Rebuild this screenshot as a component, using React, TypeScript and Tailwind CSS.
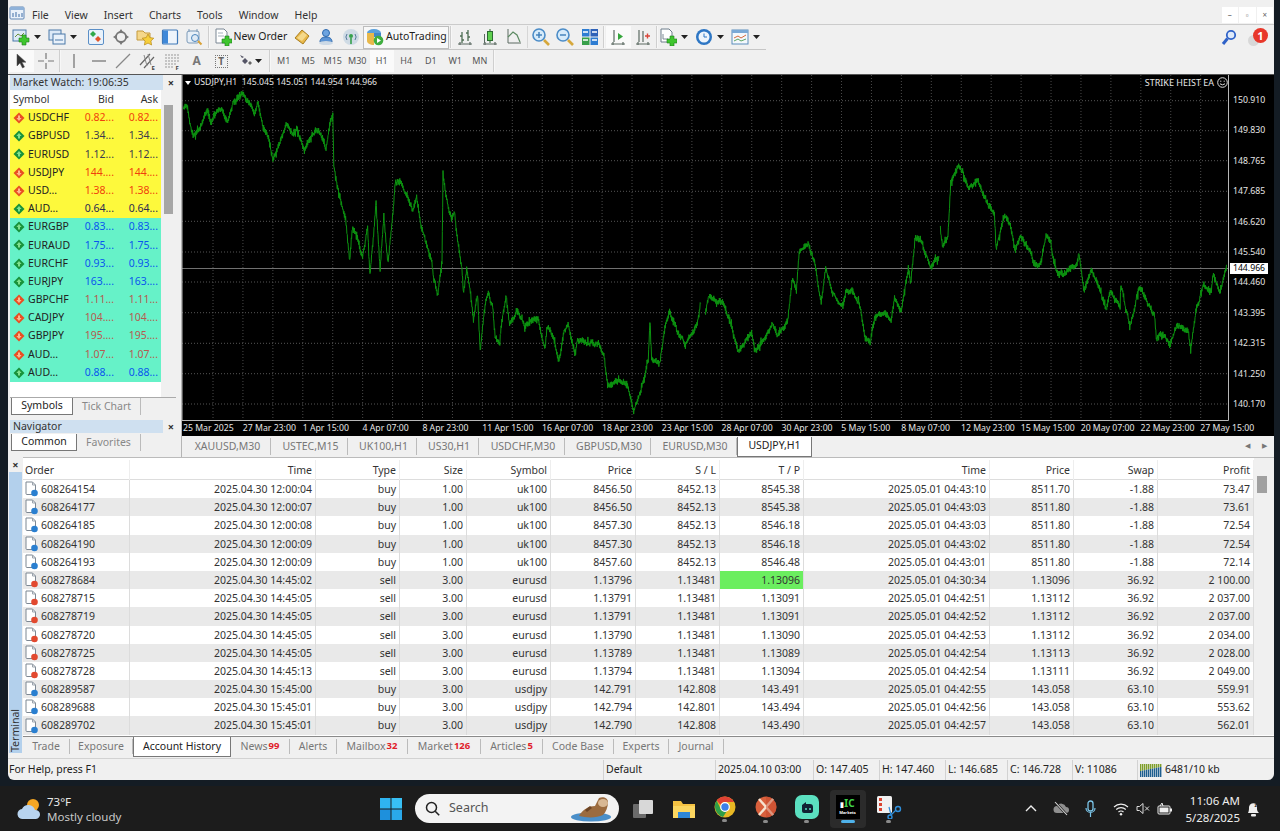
import React, { useMemo } from "react";

const font = "font-['Noto_Sans','Open_Sans',sans-serif]";

/* ---------- chart data: traced points ---------- */
const Z9: number[][] = [[10,90],[20,80],[30,130],[40,165],[60,145],[80,90],[92,130],[110,85],[128,95],[140,128],[158,65],[182,42],[205,70],[220,100],[230,65],[245,140],[262,170],[275,240],[295,190],[315,130],[335,160],[345,145],[368,215],[385,175],[410,150],[432,210],[445,120],[452,100],[455,250],[465,320],[480,380],[490,420],[502,540],[510,440],[525,480],[540,530],[555,440],[562,590],[575,440],[580,360],[582,410],[592,570],[603,410],[615,550],[630,400],[637,310],[655,310],[668,340],[690,390],[700,350],[712,430],[730,500],[745,540],[750,590],[762,640],[775,550],[778,290],[790,360],[803,420],[812,390],[820,470],[835,580],[838,640],[848,570],[860,650],[868,720],[880,640],[888,810],[900,690],[912,635],[925,680],[932,770],[945,790],[952,720],[965,650],[975,740],[997,690],[1020,740],[1045,715],[1060,720],[1080,810],[1085,745],[1105,770],[1120,850],[1135,760],[1148,735],[1168,820],[1175,780],[1210,790],[1240,795],[1255,830],[1265,920],[1295,905],[1325,915],[1342,995],[1365,930],[1385,840],[1390,720],[1395,830],[1420,850],[1432,760],[1447,690],[1470,750],[1495,790],[1530,730],[1540,670]];
const Z10A: number[][] = [[15,500],[25,440],[70,460],[90,520],[110,605],[150,545],[160,605],[185,570],[210,515],[225,555],[255,515],[268,385],[280,420],[288,310],[300,295],[315,280],[335,345],[352,460],[365,350],[385,430],[415,470],[425,420],[445,425],[465,470],[480,570],[495,575],[508,500],[535,490],[555,510],[565,440],[585,480],[605,355],[612,400],[625,265],[640,270],[670,350],[695,320]];
const Z10B: number[][] = [[698,240],[705,290],[720,260],[728,100],[750,45],[765,70],[780,120],[805,85],[825,140],[855,190],[860,295],[885,195],[900,215],[915,300],[930,260],[960,305],[970,350],[985,355],[1005,265],[1018,275],[1025,320],[1035,365],[1055,370],[1095,345],[1100,310],[1115,420],[1135,365],[1155,395],[1180,480],[1190,430],[1220,470],[1222,405],[1240,490],[1248,535],[1275,415],[1295,450],[1320,495],[1325,560],[1350,560],[1365,585],[1385,525],[1418,545],[1425,595],[1440,490],[1460,405],[1485,415],[1490,375],[1510,430],[1530,345]];

function noisy(pts: number[][], seed: number): string {
  let s = seed;
  const rnd = () => {
    s = (s * 16807) % 2147483647;
    return s / 2147483647;
  };
  const out: string[] = [];
  let flip = 1;
  let drift = 0;
  for (let i = 0; i < pts.length - 1; i++) {
    const [x0, y0] = pts[i];
    const [x1, y1] = pts[i + 1];
    const n = Math.max(1, Math.round(Math.abs(x1 - x0) / 0.4));
    for (let k = 0; k < n; k++) {
      const t = k / n;
      flip = -flip;
      drift = drift * 0.8 + (rnd() - 0.5) * 2.4;
      const spike = rnd() > 0.96 ? 3 : 0;
      const y = y0 + (y1 - y0) * t + drift + flip * (0.8 + rnd() * 2.2 + spike);
      out.push(`${(x0 + (x1 - x0) * t).toFixed(2)},${y.toFixed(1)}`);
    }
  }
  const l = pts[pts.length - 1];
  out.push(`${l[0].toFixed(1)},${l[1].toFixed(1)}`);
  return out.join(" ");
}

const gridXs = Array.from({ length: 35 }, (_, i) => 31 + i * 29.93);
const gridYs = [25.7, 55.7, 85.7, 116.3, 146.3, 177, 207, 237.7, 268.3, 298.7, 329];

function Chart() {
  const a = useMemo(() => noisy(Z9.map(([x, y]) => [180 + x / 2.958 - 182, 80 + y / 3 - 75]), 11), []);
  const b = useMemo(() => noisy(Z10A.map(([x, y]) => [700 + x / 2.904 - 182, 150 + y / 3 - 75]), 23), []);
  const c = useMemo(() => noisy(Z10B.map(([x, y]) => [700 + x / 2.904 - 182, 150 + y / 3 - 75]), 37), []);
  return (
    <svg width="1047" height="346" className="block shrink-0">
      <rect width="1047" height="346" fill="#000" />
      {gridXs.map((x) => (
        <line key={x} x1={x} x2={x} y1="0" y2="345" stroke="#4a4a4a" strokeDasharray="1 2" />
      ))}
      {gridYs.map((y) => (
        <line key={y} x1="0" x2="1047" y1={y} y2={y} stroke="#555" strokeDasharray="1 2" />
      ))}
      <line x1="0" x2="1047" y1="193.5" y2="193.5" stroke="#707070" />
      {[a, b, c].map((p, i) => (
        <polyline key={i} points={p} fill="none" stroke="#0c9210" strokeWidth="1" strokeLinejoin="round" />
      ))}
      <path d="M0 0V345.5H1046.5V0" fill="none" stroke="#b8b8b8" />
    </svg>
  );
}

/* ---------- toolbar icons ---------- */
const S = ({ children, w = 18, h = 18 }: { children: React.ReactNode; w?: number; h?: number }) => (
  <svg width={w} height={h} viewBox={`0 0 ${w} ${h}`} className="block shrink-0">
    {children}
  </svg>
);
const Caret = () => (
  <svg width="7" height="4" viewBox="0 0 7 4" className="block">
    <path d="M0 0h7L3.5 4z" fill="#222" />
  </svg>
);
const Plus = ({ x, y }: { x: number; y: number }) => (
  <path d={`M${x + 3} ${y}h4v3h3v4h-3v3h-4v-3h-3v-4h3z`} fill="#3fc52e" stroke="#1d7d1d" strokeWidth="0.6" />
);
const NewChart = () => (
  <S>
    <rect x="1" y="2" width="13" height="11" fill="#dce9f7" stroke="#4a78a8" />
    <path d="M3 9l3-3 3 2 3-3" stroke="#6b8f3a" fill="none" />
    <Plus x={7} y={7} />
  </S>
);
const Profiles = () => (
  <S>
    <rect x="1" y="2" width="12" height="10" fill="#dce9f7" stroke="#4a78a8" />
    <rect x="5" y="6" width="12" height="10" fill="#e9f1fa" stroke="#4a78a8" />
    <path d="M7 12h8" stroke="#4a78a8" />
  </S>
);
const MW = () => (
  <S>
    <rect x="1.5" y="1.5" width="15" height="15" rx="1.5" fill="#e9f2fb" stroke="#5b8fc7" />
    <path d="M6 3l3 3-3 3-3-3z" fill="#2fa84a" />
    <path d="M11 8l3 3-3 3-3-3z" fill="#e2552a" />
  </S>
);
const Nav = () => (
  <S>
    <circle cx="9" cy="9" r="5" fill="none" stroke="#777" strokeWidth="1.8" />
    <path d="M9 1l2 3H7zM9 17l-2-3h4zM1 9l3-2v4zM17 9l-3 2V7z" fill="#777" />
  </S>
);
const StarFolder = () => (
  <S>
    <path d="M1 3h6l2 2h5v7H1z" fill="#f5d78a" stroke="#c59a3c" />
    <path d="M12 6l1.8 3.6 4 .6-2.9 2.8.7 4-3.6-1.9-3.6 1.9.7-4L6.2 10.2l4-.6z" fill="#f6cf3d" stroke="#b98a17" strokeWidth="0.7" />
  </S>
);
const Term = () => (
  <S>
    <rect x="1.5" y="2" width="15" height="14" rx="1" fill="#eef4fb" stroke="#3f78b8" strokeWidth="1.2" />
    <rect x="2" y="2.5" width="5" height="13" fill="#3f88d8" />
  </S>
);
const Tester = () => (
  <S>
    <rect x="2" y="3" width="12" height="12" rx="2" fill="#e8f0f8" stroke="#7d9ab8" />
    <path d="M4 1v3M12 1v3" stroke="#7d9ab8" />
    <circle cx="10" cy="10" r="3.5" fill="#dfeaf5" stroke="#4c86bd" />
    <path d="M13 13l3.5 3.5" stroke="#d9a136" strokeWidth="2" />
  </S>
);
const NewOrderIco = () => (
  <S>
    <path d="M2 1h8l3 3v11H2z" fill="#fff" stroke="#7a8794" />
    <path d="M4 5h5M4 8h6" stroke="#a5b1bc" />
    <Plus x={8} y={8} />
  </S>
);
const Diamond = () => (
  <S>
    <path d="M9 2l7 6-6 8-8-6z" fill="#e9b94b" stroke="#a97e1f" />
    <path d="M4 10l6-6 4 3-5 6z" fill="#f5d98a" />
  </S>
);
const UserIco = () => (
  <S>
    <circle cx="9" cy="5" r="3.5" fill="#6da4e0" stroke="#2e69ad" />
    <path d="M3 14c0-4 3-5 6-5s6 1 6 5z" fill="#5d95d6" stroke="#2e69ad" />
    <ellipse cx="9" cy="15" rx="7" ry="2" fill="#ccd9e6" />
  </S>
);
const Signal = () => (
  <S>
    <circle cx="9" cy="9" r="8" fill="#cfdbe5" />
    <path d="M5 6a5 5 0 0 0 0 6M13 6a5 5 0 0 1 0 6" stroke="#55799b" fill="none" />
    <circle cx="9" cy="8" r="2" fill="#36a14c" />
    <path d="M9 10v6" stroke="#36a14c" strokeWidth="1.6" />
  </S>
);
const AutoIco = () => (
  <S>
    <ellipse cx="8" cy="5" rx="7" ry="4" fill="#5aa0dc" />
    <path d="M1 5v8c0 2 3 4 7 4V5z" fill="#e8b84a" />
    <path d="M8 5h7v4H8z" fill="#4187c7" />
    <circle cx="12.5" cy="12.5" r="4.8" fill="#3fae3f" />
    <path d="M11 10v5l4-2.5z" fill="#fff" />
  </S>
);
const Axis = () => <path d="M2 16h14M4 14v3M14 14v3" stroke="#5c6b63" strokeWidth="1.2" />;
const Bars = () => (
  <S>
    <Axis />
    <path d="M6 4v11M6 8H4M6 12h2M12 2v11M12 5h-2M12 9h2" stroke="#4d6d53" strokeWidth="1.3" />
  </S>
);
const Candle = () => (
  <S>
    <Axis />
    <path d="M9 1v14" stroke="#2c6b31" />
    <rect x="6.5" y="3.5" width="5" height="9" fill="#5fd04f" stroke="#2c6b31" />
    <path d="M3.5 6v9" stroke="#5c6b63" />
  </S>
);
const LineIco = () => (
  <S>
    <path d="M3 1v14h13" stroke="#5c6b63" fill="none" />
    <path d="M3 9l5-5 4 3 3 7" stroke="#5c8a62" fill="none" strokeWidth="1.2" />
  </S>
);
const ZoomIco = ({ plus }: { plus?: boolean }) => (
  <S w={20} h={20}>
    <circle cx="8" cy="8" r="6" fill="#d6ebfa" stroke="#4b8cc7" strokeWidth="1.6" />
    <path d="M5 8h6" stroke="#3c7db8" strokeWidth="1.4" />
    {plus && <path d="M8 5v6" stroke="#3c7db8" strokeWidth="1.4" />}
    <path d="M13 13l5 5" stroke="#d6a83c" strokeWidth="2.6" />
  </S>
);
const Tile = () => (
  <S>
    <rect x="1" y="1" width="7.5" height="7.5" fill="#2e7dd2" />
    <rect x="9.5" y="1" width="7.5" height="7.5" fill="#2f62b8" />
    <rect x="1" y="9.5" width="7.5" height="7.5" fill="#38a04a" />
    <rect x="9.5" y="9.5" width="7.5" height="7.5" fill="#2e7dd2" />
    <path d="M2 4h5M11 4h5M2 12h5M11 12h5" stroke="#fff" strokeWidth="1.4" />
  </S>
);
const ScrollIco = () => (
  <S>
    <Axis />
    <path d="M5 2v12" stroke="#5c6b63" strokeWidth="1.2" />
    <path d="M9 5l5 3.5-5 3.5z" fill="#35a63c" />
  </S>
);
const ShiftIco = () => (
  <S>
    <Axis />
    <path d="M5 2v12M9 3v11" stroke="#5c6b63" strokeWidth="1.2" />
    <path d="M11 8h5M13.5 5.5v5" stroke="#d9463a" strokeWidth="1.4" />
  </S>
);
const NewDoc = () => (
  <S>
    <path d="M2 1h8l3 3v10H2z" fill="#fff" stroke="#6f7e8c" />
    <path d="M4 6v5h5" stroke="#7d8a95" fill="none" />
    <Plus x={8} y={8} />
  </S>
);
const Clock = () => (
  <S>
    <circle cx="9" cy="9" r="8" fill="#2d76c4" />
    <circle cx="9" cy="9" r="5.5" fill="#eef5fc" />
    <path d="M9 5.5V9h3" stroke="#2d76c4" fill="none" />
  </S>
);
const Template = () => (
  <S>
    <rect x="1" y="2" width="16" height="14" fill="#f4f8fc" stroke="#5d8ebc" />
    <rect x="1" y="2" width="16" height="3" fill="#7aa9d6" />
    <path d="M3 10l4-2 3 2 5-3" stroke="#d7693a" fill="none" />
    <path d="M3 13l4-2 3 2 5-2" stroke="#5ba562" fill="none" />
  </S>
);
const Arrow = () => (
  <S>
    <path d="M5 2v12l3-3 2.5 5 2-1-2.5-4.8H14z" fill="#333" stroke="#555" strokeWidth="0.5" />
  </S>
);
const Cross = () => (
  <S>
    <path d="M9 1v6M9 11v6M1 9h6M11 9h6" stroke="#777" strokeWidth="1.2" />
  </S>
);
const VLine = () => <S><path d="M9 2v14" stroke="#777" strokeWidth="1.3" /></S>;
const HLine = () => <S><path d="M2 9h14" stroke="#777" strokeWidth="1.3" /></S>;
const Trend = () => <S><path d="M2 16L16 2" stroke="#888" strokeWidth="1.3" /></S>;
const Channel = () => (
  <S>
    <path d="M1 13L11 2M5 16L15 5" stroke="#666" strokeWidth="1.2" />
    <path d="M5 3l3 11M9 2l3 11" stroke="#888" />
    <text x="12.5" y="17.5" fontSize="6" fill="#444" fontWeight="700">E</text>
  </S>
);
const Fib = () => (
  <S>
    <path d="M2 3h14M2 6h14M2 9h14M2 12h12M2 15h8" stroke="#999" strokeDasharray="2 1" />
    <text x="12.5" y="17.5" fontSize="6" fill="#444" fontWeight="700">F</text>
  </S>
);
const ArrowsIco = () => (
  <S>
    <path d="M4 3l4 2-2 1zM9 6l3 3-3 3-3-3z" fill="#556" />
    <path d="M14 9l2 2-2 2-2-2z" fill="#666" />
  </S>
);

const Cell = ({ children, active }: { children: React.ReactNode; active?: boolean }) => (
  <div className={`flex h-[22px] w-[24.5px] shrink-0 items-center justify-center ${active ? "bg-[#fafafa]" : ""}`}>
    {children}
  </div>
);
const Drop = ({ children }: { children: React.ReactNode }) => (
  <div className="flex h-[22px] w-[36px] shrink-0 items-center pr-[4px]">
    <div className="flex w-[18px] justify-center">{children}</div>
    <div className="flex w-[14px] justify-center">
      <Caret />
    </div>
  </div>
);
const Sep = () => <div className="mx-px h-[22px] w-[2px] shrink-0 border-l border-[#cfcfcf] bg-[#f7f7f7]" />;
const ThinSep = () => <div className="h-[22px] w-[2px] shrink-0 border-l border-[#d6d6d6]" />;

function Toolbar1() {
  return (
    <div className="flex h-[25px] w-[758px] items-center border-b border-[#c6c6c6] pl-[4px]">
      <Drop><NewChart /></Drop>
      <Drop><Profiles /></Drop>
      <Cell><MW /></Cell>
      <Cell><Nav /></Cell>
      <Cell><StarFolder /></Cell>
      <Cell><Term /></Cell>
      <Cell><Tester /></Cell>
      <Sep />
      <div className="flex h-[22px] w-[79px] shrink-0 items-center gap-[2px] pl-[3px] text-[10.5px] text-[#1c1c1c]">
        <NewOrderIco />
        <span className="whitespace-nowrap">New Order</span>
      </div>
      <Cell><Diamond /></Cell>
      <Cell><UserIco /></Cell>
      <Cell><Signal /></Cell>
      <div className="flex h-[23px] w-[86px] shrink-0 items-center gap-[2px] border border-[#bdbdbd] bg-[#f8f8f8] pl-[2px] text-[10.5px] text-[#1c1c1c]">
        <AutoIco />
        <span className="whitespace-nowrap">AutoTrading</span>
      </div>
      <Sep />
      <Cell><Bars /></Cell>
      <Cell><Candle /></Cell>
      <Cell><LineIco /></Cell>
      <ThinSep />
      <Cell><ZoomIco plus /></Cell>
      <Cell><ZoomIco /></Cell>
      <Cell><Tile /></Cell>
      <Sep />
      <Cell active><ScrollIco /></Cell>
      <Cell><ShiftIco /></Cell>
      <Sep />
      <Drop><NewDoc /></Drop>
      <Drop><Clock /></Drop>
      <Drop><Template /></Drop>
    </div>
  );
}

function Toolbar2() {
  const tf = ["M1", "M5", "M15", "M30", "H1", "H4", "D1", "W1", "MN"];
  return (
    <div className="flex h-[24px] items-start pl-[1px]">
      <Cell active><Arrow /></Cell>
      <Cell><Cross /></Cell>
      <Sep />
      <Cell><VLine /></Cell>
      <Cell><HLine /></Cell>
      <Cell><Trend /></Cell>
      <Cell><Channel /></Cell>
      <Cell><Fib /></Cell>
      <Cell><span className="text-[12px] font-bold text-[#777]">A</span></Cell>
      <Cell>
        <span className="flex h-[13px] w-[13px] items-center justify-center border border-dotted border-[#777] text-[10px] font-bold leading-none text-[#666]">T</span>
      </Cell>
      <div className="flex h-[22px] w-[34px] shrink-0 items-center pl-[2px]">
        <ArrowsIco />
        <div className="ml-[1px]"><Caret /></div>
      </div>
      <Sep />
      {tf.map((t) => (
        <div key={t} className={`flex h-[22px] w-[24.5px] shrink-0 items-center justify-center text-[9px] text-[#555] ${t === "H1" ? "bg-[#fafafa]" : ""}`}>
          {t}
        </div>
      ))}
      <Sep />
    </div>
  );
}

/* ---------- market watch ---------- */
const Tick = ({ up }: { up: boolean }) => (
  <svg width="12" height="12" viewBox="0 0 12 12" className="block shrink-0">
    <path d="M6 .5l5.5 5.5L6 11.5.5 6z" fill={up ? "#17913a" : "#e94e22"} />
    {up ? <path d="M6 3l2.6 3H7v2.6H5V6H3.4z" fill="#7fe08c" /> : <path d="M6 9L3.4 6H5V3.4h2V6h1.6z" fill="#ffb68c" />}
  </svg>
);
const watch: [string, boolean, string, string, string][] = [
  ["USDCHF", false, "0.82...", "text-[#f0400c]", "bg-[#fdf93c]"],
  ["GBPUSD", true, "1.34...", "text-[#3c3c4c]", "bg-[#fdf93c]"],
  ["EURUSD", true, "1.12...", "text-[#3c3c4c]", "bg-[#fdf93c]"],
  ["USDJPY", false, "144....", "text-[#f0400c]", "bg-[#fdf93c]"],
  ["USD...", false, "1.38...", "text-[#f0400c]", "bg-[#fdf93c]"],
  ["AUD...", true, "0.64...", "text-[#2c2c50]", "bg-[#fdf93c]"],
  ["EURGBP", true, "0.83...", "text-[#0a55ee]", "bg-[#66f2c8]"],
  ["EURAUD", true, "1.75...", "text-[#0a55ee]", "bg-[#66f2c8]"],
  ["EURCHF", true, "0.93...", "text-[#0a55ee]", "bg-[#66f2c8]"],
  ["EURJPY", true, "163....", "text-[#0a55ee]", "bg-[#66f2c8]"],
  ["GBPCHF", false, "1.11...", "text-[#b65a50]", "bg-[#66f2c8]"],
  ["CADJPY", false, "104....", "text-[#b65a50]", "bg-[#66f2c8]"],
  ["GBPJPY", false, "195....", "text-[#b65a50]", "bg-[#66f2c8]"],
  ["AUD...", false, "1.07...", "text-[#b65a50]", "bg-[#66f2c8]"],
  ["AUD...", true, "0.88...", "text-[#0a55ee]", "bg-[#66f2c8]"],
];

const PanelTab = ({ label, active, w }: { label: string; active?: boolean; w: string }) => (
  <div className={`flex h-[17px] ${w} shrink-0 items-center justify-center text-[10.5px] ${active ? "border-b border-l border-r border-[#777] bg-white text-[#222]" : "border-r border-[#bbb] text-[#888]"}`}>
    {label}
  </div>
);
const X = () => <span className="text-[11px] font-bold leading-none text-[#333]">×</span>;

function LeftPanel() {
  return (
    <div className="flex w-[174px] shrink-0 flex-col border-r border-[#b5b5b5] pl-[2px] text-[10.5px] text-[#333]">
      <div className="flex h-[15px] items-center">
        <div className="flex h-[15px] w-[153px] items-center bg-[#cfe0f0] pl-[3px] text-[10.5px] text-[#333]">Market Watch: 19:06:35</div>
        <div className="flex w-[16px] justify-center"><X /></div>
      </div>
      <div className="flex">
        <div className="w-[151px] bg-white">
          <div className="grid h-[19px] grid-cols-[65px_42px_44px] items-center">
            <span className="pl-[3px]">Symbol</span>
            <span className="pr-[3px] text-right">Bid</span>
            <span className="pr-[3px] text-right">Ask</span>
          </div>
          {watch.map(([sym, up, val, tc, bg], i) => (
            <div key={i} className={`grid h-[18.2px] grid-cols-[65px_42px_44px] items-center ${bg}`}>
              <span className="flex items-center gap-[3px] pl-[3px] text-[#222]">
                <Tick up={up} />
                {sym}
              </span>
              <span className={`pr-[3px] text-right ${tc}`}>{val}</span>
              <span className={`pr-[3px] text-right ${tc}`}>{val}</span>
            </div>
          ))}
          <div className="h-[15px]" />
        </div>
        <div className="h-[307px] w-[14px] bg-[#f0f0f0] pl-[3px] pt-[15px]">
          <div className="h-[109px] w-[9px] bg-[#a6a6a6]" />
        </div>
      </div>
      <div className="flex h-[17px] w-[166px] border-t border-[#aaa] pl-px">
        <PanelTab label="Symbols" active w="w-[62px]" />
        <PanelTab label="Tick Chart" w="w-[68px]" />
      </div>
      <div className="mt-[6px] flex h-[13px] items-center">
        <div className="flex h-[13px] w-[153px] items-center bg-[#cfe0f0] pl-[3px] text-[#333]">Navigator</div>
        <div className="flex w-[16px] justify-center"><X /></div>
      </div>
      <div className="mt-[1px] flex pl-px">
        <PanelTab label="Common" active w="w-[66px]" />
        <PanelTab label="Favorites" w="w-[64px]" />
      </div>
    </div>
  );
}

/* ---------- chart column ---------- */
const prices = ["150.910", "149.830", "148.765", "147.685", "146.620", "145.540", "144.460", "143.395", "142.315", "141.250", "140.170"];
const dates = ["25 Mar 2025", "27 Mar 23:00", "1 Apr 15:00", "4 Apr 07:00", "8 Apr 23:00", "11 Apr 15:00", "16 Apr 07:00", "18 Apr 23:00", "23 Apr 15:00", "28 Apr 07:00", "30 Apr 23:00", "5 May 15:00", "8 May 07:00", "12 May 23:00", "15 May 15:00", "20 May 07:00", "22 May 23:00", "27 May 15:00"];
const chartTabs: [string, string][] = [["XAUUSD,M30", "w-[89px]"], ["USTEC,M15", "w-[77px]"], ["UK100,H1", "w-[69px]"], ["US30,H1", "w-[62px]"], ["USDCHF,M30", "w-[86px]"], ["GBPUSD,M30", "w-[86px]"], ["EURUSD,M30", "w-[86px]"], ["USDJPY,H1", "w-[75px]"]];

function ChartColumn() {
  return (
    <div className="flex min-w-0 flex-1 flex-col">
      <div className="relative h-[361px] bg-black text-[8.7px] text-[#e6e6e6]">
        <div className="flex h-[346px]">
          <Chart />
          <div className="h-[346px] flex-1 overflow-hidden pl-[4px] pt-[19px]">
            {prices.map((p) => (
              <div key={p} className="flex h-[30.4px] items-start leading-[13px]">
                <span>{p}</span>
              </div>
            ))}
          </div>
        </div>
        <div className="flex h-[15px] items-center">
          {dates.map((d) => (
            <span key={d} className="w-[59.85px] shrink-0 whitespace-nowrap pl-px">{d}</span>
          ))}
        </div>
        {/* overlays */}
        <div className="absolute left-[3px] top-[1px] flex items-center gap-[3px]">
          <svg width="6" height="4" viewBox="0 0 6 4"><path d="M0 0h6L3 4z" fill="#fff" /></svg>
          <span className="whitespace-pre text-[8.7px]">USDJPY,H1  145.045 145.051 144.954 144.966</span>
        </div>
        <div className="absolute right-[46px] top-[1px] flex items-center gap-[3px] text-[9px]">
          <span className="whitespace-nowrap">STRIKE HEIST EA</span>
          <svg width="11" height="11" viewBox="0 0 11 11">
            <circle cx="5.5" cy="5.5" r="4.8" fill="none" stroke="#ddd" />
            <circle cx="3.8" cy="4.2" r="0.6" fill="#ddd" />
            <circle cx="7.2" cy="4.2" r="0.6" fill="#ddd" />
            <path d="M3 6.8q2.5 2 5 0" stroke="#ddd" fill="none" />
          </svg>
        </div>
        <div className="absolute left-[1048px] top-[188px] flex h-[11px] w-[38px] items-center justify-center bg-white text-[8.7px] text-black">144.966</div>
      </div>
      <div className="flex h-[21px] items-center text-[10.5px] text-[#777]">
        {chartTabs.map(([t, w], i) =>
          i === 7 ? (
            <div key={t} className={`flex h-[20px] ${w} shrink-0 items-center justify-center border-x border-b border-[#777] bg-white text-[#222]`}>{t}</div>
          ) : (
            <div key={t} className={`flex h-[17px] ${w} shrink-0 items-center justify-center border-r border-[#bbb] pl-[3px]`}>{t}</div>
          )
        )}
        <div className="ml-auto flex gap-[12px] pr-[7px] text-[7px] text-[#777]">
          <span>◀</span>
          <span>▶</span>
        </div>
      </div>
    </div>
  );
}

/* ---------- terminal ---------- */
type R = [string, string, string, string, string, string, string, string, string, string, string, string, string];
const B1 = (o: string, t: string, p: string, tp: string, ct: string, cp: string, pr: string): R => [o, "2025.04.30 " + t, "buy", "1.00", "uk100", p, "8452.13", tp, "2025.05.01 " + ct, cp, "-1.88", pr, "b"];
const S3 = (o: string, t: string, p: string, tp: string, ct: string, cp: string, pr: string): R => [o, "2025.04.30 " + t, "sell", "3.00", "eurusd", p, "1.13481", tp, "2025.05.01 " + ct, cp, "36.92", pr, "s"];
const J3 = (o: string, t: string, p: string, sl: string, tp: string, ct: string, pr: string): R => [o, "2025.04.30 " + t, "buy", "3.00", "usdjpy", p, sl, tp, "2025.05.01 " + ct, "143.058", "63.10", pr, "b"];
const rows: R[] = [
  B1("608264154", "12:00:04", "8456.50", "8545.38", "04:43:10", "8511.70", "73.47"),
  B1("608264177", "12:00:07", "8456.50", "8545.38", "04:43:03", "8511.80", "73.61"),
  B1("608264185", "12:00:08", "8457.30", "8546.18", "04:43:03", "8511.80", "72.54"),
  B1("608264190", "12:00:09", "8457.30", "8546.18", "04:43:02", "8511.80", "72.54"),
  B1("608264193", "12:00:09", "8457.60", "8546.48", "04:43:01", "8511.80", "72.14"),
  S3("608278684", "14:45:02", "1.13796", "1.13096", "04:30:34", "1.13096", "2 100.00"),
  S3("608278715", "14:45:05", "1.13791", "1.13091", "04:42:51", "1.13112", "2 037.00"),
  S3("608278719", "14:45:05", "1.13791", "1.13091", "04:42:52", "1.13112", "2 037.00"),
  S3("608278720", "14:45:05", "1.13790", "1.13090", "04:42:53", "1.13112", "2 034.00"),
  S3("608278725", "14:45:05", "1.13789", "1.13089", "04:42:54", "1.13113", "2 028.00"),
  S3("608278728", "14:45:13", "1.13794", "1.13094", "04:42:54", "1.13111", "2 049.00"),
  J3("608289587", "15:45:00", "142.791", "142.808", "143.491", "04:42:55", "559.91"),
  J3("608289688", "15:45:01", "142.794", "142.801", "143.494", "04:42:56", "553.62"),
  J3("608289702", "15:45:01", "142.790", "142.808", "143.490", "04:42:57", "562.01"),
];
const cols = "grid grid-cols-[107px_186px_84px_67px_84px_85px_84px_84px_186px_84px_84px_96px]";
const heads = ["Order", "Time", "Type", "Size", "Symbol", "Price", "S / L", "T / P", "Time", "Price", "Swap", "Profit"];

const OrderIco = ({ sell }: { sell: boolean }) => (
  <svg width="15" height="16" viewBox="0 0 15 16" className="block shrink-0">
    <path d="M2 1h6.5L11.5 4v9.5H3a1 1 0 0 1-1-1z" fill="#fff" stroke="#7d8792" />
    <path d="M8.5 1v3h3" fill="none" stroke="#9aa3ac" />
    <circle cx="10.5" cy="12" r="3.3" fill={sell ? "#e2492f" : "#2a7fd0"} />
  </svg>
);

const bottomTabs: [string, string, string][] = [["Trade", "", "w-[47px]"], ["Exposure", "", "w-[63px]"], ["Account History", "", "w-[98px]"], ["News", "99", "w-[59px]"], ["Alerts", "", "w-[47px]"], ["Mailbox", "32", "w-[71px]"], ["Market", "126", "w-[73px]"], ["Articles", "5", "w-[62px]"], ["Code Base", "", "w-[71px]"], ["Experts", "", "w-[55px]"], ["Journal", "", "w-[55px]"]];

function Terminal() {
  return (
    <div className="flex h-[301px] shrink-0 text-[10.5px] text-[#333]">
      <div className="flex w-[15px] shrink-0 flex-col items-center">
        <div className="flex h-[14px] items-center"><X /></div>
        <div className="relative mt-[1px] h-[281px] w-[13px] bg-[#b3d0ec]">
          <span className="absolute bottom-[1px] left-0 rotate-180 text-[10.5px] leading-[13px] text-[#333] [writing-mode:vertical-rl]">Terminal</span>
        </div>
      </div>
      <div className="flex min-w-0 flex-1 flex-col">
        <div className="flex h-[279px] flex-col border-t border-[#bbb] bg-white">
          <div className="flex">
            <div className="w-[1231px] shrink-0">
              <div className={`${cols} h-[22px] items-center border-b border-[#ddd] pt-[2px]`}>
                {heads.map((h, i) => (
                  <span key={i} className={`h-full border-r border-[#eee] px-[3px] leading-[20px] ${i === 0 ? "pl-[2px]" : "text-right"}`}>{h}</span>
                ))}
              </div>
              {rows.map((r, ri) => (
                <div key={r[0]} className={`${cols} h-[18.2px] items-center leading-[18.2px] ${ri % 2 ? "bg-[#e9e9e9]" : "bg-white"}`}>
                  <span className="flex h-full items-center gap-[2px] border-r border-[#dcdcdc] pl-[1px]">
                    <OrderIco sell={r[12] === "s"} />
                    {r[0]}
                  </span>
                  {r.slice(1, 12).map((c, ci) => (
                    <span key={ci} className={`h-full border-r border-[#dcdcdc] px-[3px] text-right ${ri === 5 && ci === 6 ? "bg-[#6bee5f]" : ""}`}>{c}</span>
                  ))}
                </div>
              ))}
            </div>
            <div className="flex-1 bg-[#f0f0f0] pl-[3px] pt-[18px]">
              <div className="h-[17px] w-[10px] bg-[#a0a0a0]" />
            </div>
          </div>
        </div>
        <div className="flex h-[22px] items-start border-t border-[#8a8a8a] bg-[#f0f0f0] text-[#777]">
          {bottomTabs.map(([t, n, w], i) =>
            i === 2 ? (
              <div key={t} className={`flex h-[20px] ${w} shrink-0 items-center justify-center border-x border-b border-[#777] bg-white text-[#222]`}>{t}</div>
            ) : (
              <div key={t} className={`mt-[2px] flex h-[15px] ${w} shrink-0 items-center justify-center gap-[1px] border-r border-[#bbb]`}>
                {t}
                {n && <span className="text-[9.5px] font-bold text-[#e0202a]">{n}</span>}
              </div>
            )
          )}
        </div>
      </div>
    </div>
  );
}

function StatusBar() {
  const cells: [string, string][] = [["Default", "w-[112px]"], ["2025.04.10 03:00", "w-[98px]"], ["O: 147.405", "w-[66px]"], ["H: 147.460", "w-[66px]"], ["L: 146.685", "w-[62px]"], ["C: 146.728", "w-[65px]"], ["V: 11086", "w-[65px]"]];
  return (
    <div className="flex h-[22px] shrink-0 items-center border-t border-[#d2d2d2] pt-px text-[10.5px] text-[#222]">
      <div className="w-[595px] shrink-0 pl-px">For Help, press F1</div>
      {cells.map(([c, w]) => (
        <div key={c} className={`flex h-[20px] ${w} shrink-0 items-center border-l border-[#d2d2d2] pl-[2px]`}>{c}</div>
      ))}
      <div className="flex h-[20px] flex-1 items-center gap-[3px] border-l border-[#d2d2d2] pl-[2px]">
        <svg width="22" height="13" viewBox="0 0 22 13" className="block">
          {Array.from({ length: 11 }, (_, i) => (
            <g key={i}>
              <rect x={i * 2} y="0" width="1.4" height={7 - i * 0.4} fill="#7f9f2a" />
              <rect x={i * 2} y={7 - i * 0.4} width="1.4" height={6 + i * 0.4} fill="#1d5e8f" />
            </g>
          ))}
        </svg>
        <span>6481/10 kb</span>
      </div>
    </div>
  );
}

/* ---------- taskbar ---------- */
const Dot = ({ blue }: { blue?: boolean }) => (
  <div className={blue ? "mt-[1px] h-[3px] w-[14px] rounded-full bg-[#4fb2ea]" : "mt-[1px] h-[3px] w-[5px] rounded-full bg-[#8a8a8a]"} />
);
const TaskIcon = ({ children, dot, active, w = "w-[41px]" }: { children: React.ReactNode; dot?: boolean; active?: boolean; w?: string }) => (
  <div className={`flex h-[38px] ${w} shrink-0 flex-col items-center justify-center`}>
    <div className={active ? "flex h-[38px] w-[36px] flex-col items-center justify-center rounded-[4px] bg-[#2b2b2b]" : "flex flex-col items-center"}>
      {children}
      {dot && <Dot blue={active} />}
    </div>
  </div>
);

function Taskbar() {
  return (
    <div className="mt-[6px] flex flex-1 items-center bg-[#1c1c1c] text-white">
      <div className="flex w-[372px] shrink-0 items-center gap-[5px] pl-[17px]">
        <svg width="25" height="24" viewBox="0 0 25 24" className="block">
          <circle cx="16" cy="8" r="6" fill="#f5a623" />
          <path d="M6 22a5 5 0 0 1-1-10 7 7 0 0 1 13 1 4.5 4.5 0 0 1 1 9z" fill="#b8d4f0" />
        </svg>
        <div className="text-[11.5px] leading-[15px] text-[#e8e8e8]">
          <div>73°F</div>
          <div className="text-[#c8c8c8]">Mostly cloudy</div>
        </div>
      </div>
      <svg width="22" height="22" viewBox="0 0 22 22" className="ml-[8px] block shrink-0">
        <rect width="10.5" height="10.5" fill="#2fb4f0" />
        <rect x="11.5" width="10.5" height="10.5" fill="#38c0f5" />
        <rect y="11.5" width="10.5" height="10.5" fill="#1e90dc" />
        <rect x="11.5" y="11.5" width="10.5" height="10.5" fill="#2aa8ea" />
      </svg>
      <div className="ml-[13px] flex h-[29px] w-[204px] shrink-0 items-center justify-between rounded-full bg-[#f3f3f3] pl-[10px] pr-[4px]">
        <div className="flex items-center gap-[9px]">
          <svg width="15" height="15" viewBox="0 0 15 15" className="block">
            <circle cx="6.5" cy="6.5" r="5" fill="none" stroke="#222" strokeWidth="1.5" />
            <path d="M10.2 10.2l4 4" stroke="#222" strokeWidth="1.6" />
          </svg>
          <span className="text-[12.5px] text-[#555]">Search</span>
        </div>
        <svg width="44" height="28" viewBox="0 0 44 28" className="block">
          <ellipse cx="20" cy="22" rx="20" ry="4.5" fill="#4a8fc9" />
          <path d="M8 21c4-7 10-10 16-10l4-8c4-2 9 0 9 4 0 5-2 10-5 13-6 3-16 3-24 1z" fill="#9b6b3f" />
          <ellipse cx="32" cy="8" rx="5" ry="4" fill="#d8b894" />
          <path d="M14 15l5-4 2 2-5 4z" fill="#6d4526" />
        </svg>
      </div>
      <div className="ml-[3px] flex items-center">
        <TaskIcon>
          <svg width="22" height="22" viewBox="0 0 22 22" className="block">
            <rect x="1" y="6" width="13" height="14" rx="1" fill="#6b6b6b" />
            <rect x="7" y="2" width="14" height="14" rx="1" fill="#d8d8d8" />
          </svg>
        </TaskIcon>
        <TaskIcon>
          <svg width="24" height="22" viewBox="0 0 24 22" className="block">
            <path d="M1 3h8l2 3h12v14H1z" fill="#f5c242" />
            <path d="M1 8h22v12H1z" fill="#fbd660" />
            <rect x="6" y="14" width="12" height="6" fill="#2e86d6" />
          </svg>
        </TaskIcon>
        <TaskIcon dot>
          <svg width="22" height="22" viewBox="0 0 22 22" className="block">
            <circle cx="11" cy="11" r="10.5" fill="#e8b824" />
            <path d="M11 .5A10.5 10.5 0 0 1 20 6H11a5 5 0 0 0-4.5 2.8L2.6 4.6A10.5 10.5 0 0 1 11 .5z" fill="#e04234" />
            <path d="M1 11a10.5 10.5 0 0 0 8 10l3.6-5.5a5 5 0 0 1-6-2.7L2.6 4.6A10.5 10.5 0 0 0 1 11z" fill="#2f9e48" />
            <circle cx="11" cy="11" r="4.3" fill="#3d80e8" stroke="#fff" strokeWidth="1.2" />
          </svg>
        </TaskIcon>
        <TaskIcon dot>
          <svg width="22" height="24" viewBox="0 0 22 24" className="block">
            <circle cx="11" cy="12" r="10.5" fill="#d9603c" />
            <path d="M4 4l14 16M18 4L4 20" stroke="#f6e3d0" strokeWidth="2.4" />
            <path d="M11 1.5a10.5 10.5 0 0 1 0 21" fill="#c5472b" opacity="0.5" />
          </svg>
        </TaskIcon>
        <TaskIcon dot>
          <svg width="24" height="24" viewBox="0 0 24 24" className="block">
            <rect width="24" height="24" rx="7" fill="#5be0c0" />
            <path d="M7 10l4-3v2h4a3 3 0 0 1 3 3v4a2 2 0 0 1-2 2H9a2 2 0 0 1-2-2z" fill="#123" />
            <circle cx="11" cy="14" r="1" fill="#5be0c0" />
            <circle cx="15" cy="14" r="1" fill="#5be0c0" />
          </svg>
        </TaskIcon>
        <TaskIcon dot active>
          <div className="flex h-[24px] w-[24px] flex-col items-center justify-center bg-black leading-none">
            <span className="text-[10px] font-bold leading-[10px] text-[#3fd24a]">
              <span className="text-[7px] text-white">▮</span>IC
            </span>
            <span className="text-[4px] font-bold leading-[6px] text-white">Markets</span>
          </div>
        </TaskIcon>
        <TaskIcon dot>
          <svg width="26" height="24" viewBox="0 0 26 24" className="block">
            <rect x="1" y="1" width="15" height="17" rx="1.5" fill="#f0f0f0" />
            <path d="M3 3h3v3H3zM3 8h3v3H3zM3 13h3v3H3z" fill="#d9432f" />
            <circle cx="22" cy="14" r="2.5" fill="none" stroke="#2f8fdc" strokeWidth="1.4" />
            <circle cx="14" cy="22" r="2" fill="none" stroke="#2f8fdc" strokeWidth="1.4" />
            <path d="M15 20l5-5M13 12l2 8" stroke="#2f8fdc" strokeWidth="1.2" />
          </svg>
        </TaskIcon>
      </div>
      <div className="ml-auto flex items-center pr-[19px]">
        <div className="flex items-center gap-[16px]">
          <svg width="12" height="7" viewBox="0 0 12 7"><path d="M1 6l5-5 5 5" stroke="#eee" strokeWidth="1.4" fill="none" /></svg>
          <svg width="16" height="15" viewBox="0 0 16 15">
            <path d="M4 12a3.5 3.5 0 0 1 0-7 5 5 0 0 1 9 1 3 3 0 0 1 0 6z" fill="#8f8f8f" />
            <path d="M2 1l12 13" stroke="#1c1c1c" strokeWidth="2.5" />
            <path d="M2 1l12 13" stroke="#ddd" strokeWidth="1.1" />
          </svg>
          <svg width="11" height="18" viewBox="0 0 11 18" className="mr-[1px]">
            <rect x="3" y="1" width="5" height="10" rx="2.5" fill="none" stroke="#7cc6ea" strokeWidth="1.3" />
            <path d="M1 8a4.5 4.5 0 0 0 9 0M5.5 13v4" stroke="#7cc6ea" strokeWidth="1.2" fill="none" />
          </svg>
          <div className="flex items-center gap-[7px]">
            <svg width="16" height="14" viewBox="0 0 16 14">
              <path d="M1 5a10 10 0 0 1 14 0M3.2 7.5a7 7 0 0 1 9.6 0M5.5 10a3.5 3.5 0 0 1 5 0" stroke="#eee" strokeWidth="1.1" fill="none" />
              <circle cx="8" cy="12.3" r="1.2" fill="#eee" />
            </svg>
            <svg width="14" height="13" viewBox="0 0 14 13">
              <path d="M1 4.5h2.5L7 1.5v10l-3.5-3H1z" fill="none" stroke="#ddd" />
              <path d="M9 4.5l4 4M13 4.5l-4 4" stroke="#ddd" />
            </svg>
            <svg width="16" height="14" viewBox="0 0 16 14">
              <rect x="1" y="4" width="12" height="8" rx="1" fill="none" stroke="#eee" />
              <rect x="2.5" y="5.5" width="9" height="5" fill="#eee" />
              <rect x="13" y="6.5" width="2" height="3" fill="#eee" />
              <path d="M3 4l2-3 1 3" stroke="#eee" fill="none" />
            </svg>
          </div>
        </div>
        <div className="ml-[12px] text-right text-[11.5px] leading-[17px] text-[#eee]">
          <div>11:06 AM</div>
          <div>5/28/2025</div>
        </div>
        <svg width="15" height="18" viewBox="0 0 15 18" className="ml-[6px] block">
          <path d="M2 13c1-2 1-4 1-6a4.5 4.5 0 0 1 7 -3c1 1 1 3 1 4 0 2 0 3 2 5z" fill="#eee" />
          <rect x="5" y="14" width="5" height="2.5" rx="1" fill="#eee" />
          <text x="8.5" y="6.5" fontSize="5.5" fill="#222" fontWeight="700">z</text>
        </svg>
      </div>
    </div>
  );
}

export default function App() {
  return (
    <div className={`${font} flex h-[831px] w-[1280px] flex-col overflow-hidden bg-[#141c24]`}>
      <div className="ml-[8px] mr-[6px] flex h-[780px] shrink-0 flex-col rounded-b-[6px] bg-[#f0f0f0]">
        <div className="flex h-[25px] shrink-0 items-center border-b border-[#cbcbcb] pt-[6px] text-[10.5px] text-[#333]">
          <svg width="17" height="17" viewBox="0 0 17 17" className="-mt-[5px] ml-[1px] mr-[5px] block shrink-0">
            <rect x="1" y="3" width="14" height="12" rx="1" fill="#eaf1fa" stroke="#6186b5" />
            <rect x="1" y="3" width="14" height="3" fill="#8fb2d9" />
            <path d="M4 13V9M7 13V8M10 13v-3M13 13V9" stroke="#3f6da5" />
          </svg>
          <div className="mt-[1px] flex gap-[16px] pl-px">
            {["File", "View", "Insert", "Charts", "Tools", "Window", "Help"].map((m) => (
              <span key={m}>{m}</span>
            ))}
          </div>
          <div className="ml-auto flex gap-px pr-[1px]">
            {["–", "▫", "×"].map((c) => (
              <div key={c} className="flex h-[16px] w-[16.5px] items-center justify-center bg-white text-[8px] leading-none text-[#666]">{c}</div>
            ))}
          </div>
        </div>
        <div className="relative h-[49px] shrink-0">
          <Toolbar1 />
          <Toolbar2 />
          <svg width="16" height="17" viewBox="0 0 16 17" className="absolute right-[37px] top-[4px] block">
            <circle cx="10" cy="6" r="4.2" fill="#dfeafa" stroke="#2f62c8" strokeWidth="1.8" />
            <path d="M6.5 9.5L2 15" stroke="#2f62c8" strokeWidth="3" />
          </svg>
          <div className="absolute right-[6px] top-[3px] h-[20px] w-[20px]">
            <div className="absolute left-0 top-[7px] h-[11px] w-[11px] rounded-full bg-[#d8d8d8]" />
            <div className="absolute left-[5px] top-0 flex h-[15px] w-[15px] items-center justify-center rounded-full bg-[#e8372a] text-[11px] font-bold leading-none text-white">1</div>
          </div>
        </div>
        <div className="flex h-[383px] shrink-0 border-t border-[#555]">
          <LeftPanel />
          <ChartColumn />
        </div>
        <Terminal />
        <StatusBar />
      </div>
      <Taskbar />
    </div>
  );
}
